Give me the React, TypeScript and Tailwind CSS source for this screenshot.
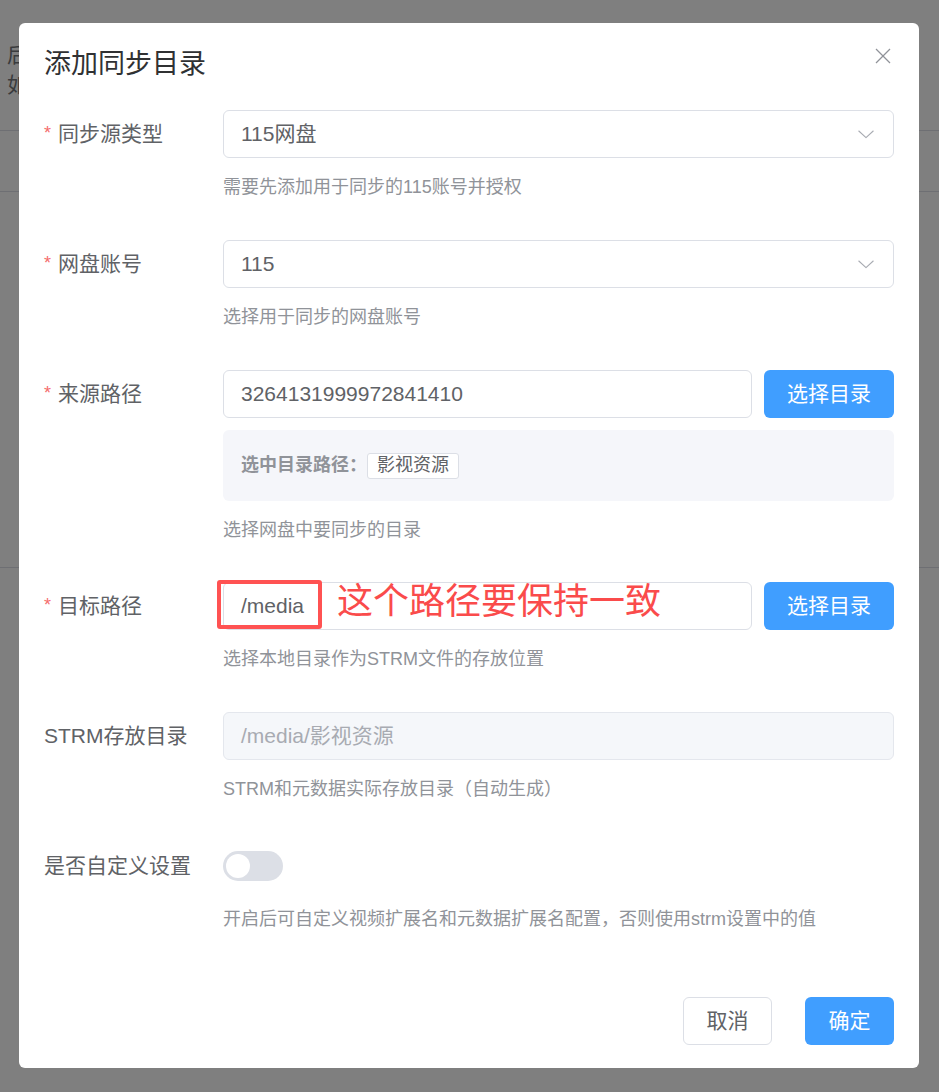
import React from "react";

const font = "font-['Liberation_Sans','Noto_Sans_CJK_SC',sans-serif]";

function Chevron() {
  return (
    <svg width="16" height="16" viewBox="0 0 16 16" fill="none">
      <polyline points="0.8,5 8,11.6 15.2,5" stroke="#a8abb2" strokeWidth="1.1" strokeLinejoin="round" strokeLinecap="round" />
    </svg>
  );
}

function Label({ text, required }: { text: string; required?: boolean }) {
  return (
    <div className="w-[179px] h-[48px] shrink-0 flex items-center text-[21px] text-[#606266]">
      {required && <span className="text-[#f56c6c] text-[18px] w-[14px] leading-none -mt-[2px]">*</span>}
      <span>{text}</span>
    </div>
  );
}

function Helper({ text }: { text: string }) {
  return <div className="mt-[16px] text-[18px] leading-[27px] text-[#909399]">{text}</div>;
}

function SelectBox({ value }: { value: string }) {
  return (
    <div className="h-[48px] w-full rounded-[6px] border border-[#dcdfe6] bg-white flex items-center justify-between pl-[17px] pr-[19px] text-[21px] text-[#606266]">
      <span>{value}</span>
      <Chevron />
    </div>
  );
}

function BlueBtn({ text, w }: { text: string; w: string }) {
  return (
    <div className={`${w} h-[48px] shrink-0 rounded-[6px] bg-[#409eff] text-white text-[21px] flex items-center justify-center`}>
      {text}
    </div>
  );
}

export default function App() {
  return (
    <div className={`relative w-[939px] h-[1092px] overflow-hidden bg-[#7f7f7f] ${font}`}>
      {/* background page (dimmed) */}
      <div className="h-[130px] pt-[40px] pl-[7px]">
        <div className="text-[21px] leading-[30px] text-[#3a3b3d] whitespace-nowrap">
          <div>后</div>
          <div>如</div>
        </div>
      </div>
      <div className="h-[1px] bg-[#6e6f73]" />
      <div className="h-[60px]" />
      <div className="h-[1px] bg-[#6e6f73]" />
      <div className="h-[375px]" />
      <div className="h-[1px] bg-[#6e6f73]" />

      {/* dialog overlay */}
      <div className="absolute inset-0 pt-[23px] pl-[19px]">
        <div className="relative w-[900px] h-[1045px] bg-white rounded-[6px] px-[25px] pt-[23px]">
          <div className="text-[27px] leading-[36px] text-[#303133]">添加同步目录</div>
          <div className="absolute top-[25px] right-[28px] w-[16px] h-[16px]">
            <svg width="16" height="16" viewBox="0 0 16 16">
              <line x1="1" y1="1" x2="15" y2="15" stroke="#909399" strokeWidth="1.3" />
              <line x1="15" y1="1" x2="1" y2="15" stroke="#909399" strokeWidth="1.3" />
            </svg>
          </div>

          <div className="mt-[28px]">
            {/* row 1 */}
            <div className="flex mb-[39px]">
              <Label text="同步源类型" required />
              <div className="flex-1">
                <SelectBox value="115网盘" />
                <Helper text="需要先添加用于同步的115账号并授权" />
              </div>
            </div>

            {/* row 2 */}
            <div className="flex mb-[39px]">
              <Label text="网盘账号" required />
              <div className="flex-1">
                <SelectBox value="115" />
                <Helper text="选择用于同步的网盘账号" />
              </div>
            </div>

            {/* row 3 */}
            <div className="flex mb-[38px]">
              <Label text="来源路径" required />
              <div className="flex-1">
                <div className="flex gap-[12px]">
                  <div className="flex-1 h-[48px] rounded-[6px] border border-[#dcdfe6] flex items-center pl-[17px] text-[21px] text-[#606266]">
                    3264131999972841410
                  </div>
                  <BlueBtn text="选择目录" w="w-[130px]" />
                </div>
                <div className="mt-[12px] h-[71px] rounded-[6px] bg-[#f5f6fa] flex items-center px-[18px]">
                  <span className="text-[18px] font-bold text-[#909399]">选中目录路径：</span>
                  <span className="h-[26px] px-[9px] flex items-center rounded-[3px] border border-[#dcdfe6] bg-white text-[18px] text-[#606266]">
                    影视资源
                  </span>
                </div>
                <Helper text="选择网盘中要同步的目录" />
              </div>
            </div>

            {/* row 4 */}
            <div className="flex mb-[39px]">
              <Label text="目标路径" required />
              <div className="flex-1">
                <div className="flex gap-[12px]">
                  <div className="relative flex-1 h-[48px] rounded-[6px] border border-[#dcdfe6] flex items-center pl-[17px] text-[21px] text-[#606266]">
                    /media
                    <div className="absolute left-[-7px] top-[-3px] w-[105px] h-[49px] rounded-[3px] border-[4px] border-[#ff5252]" />
                    <div className="absolute left-[113px] top-[-5px] text-[36px] leading-[48px] text-[#fa4b4b] whitespace-nowrap">
                      这个路径要保持一致
                    </div>
                  </div>
                  <BlueBtn text="选择目录" w="w-[130px]" />
                </div>
                <Helper text="选择本地目录作为STRM文件的存放位置" />
              </div>
            </div>

            {/* row 5 */}
            <div className="flex mb-[39px]">
              <Label text="STRM存放目录" />
              <div className="flex-1">
                <div className="h-[48px] rounded-[6px] border border-[#e4e7ed] bg-[#f5f7fa] flex items-center pl-[17px] text-[21px] text-[#a8abb2]">
                  /media/影视资源
                </div>
                <Helper text="STRM和元数据实际存放目录（自动生成）" />
              </div>
            </div>

            {/* row 6 */}
            <div className="flex">
              <Label text="是否自定义设置" />
              <div className="flex-1">
                <div className="h-[48px] flex items-center">
                  <div className="w-[60px] h-[30px] rounded-full bg-[#dcdfe6] flex items-center">
                    <div className="ml-[3px] w-[24px] h-[24px] rounded-full bg-white" />
                  </div>
                </div>
                <Helper text="开启后可自定义视频扩展名和元数据扩展名配置，否则使用strm设置中的值" />
              </div>
            </div>
          </div>

          {/* footer */}
          <div className="mt-[64px] flex justify-end gap-[33px]">
            <div className="w-[89px] h-[48px] rounded-[6px] border border-[#dcdfe6] bg-white text-[21px] text-[#606266] flex items-center justify-center">
              取消
            </div>
            <BlueBtn text="确定" w="w-[89px]" />
          </div>
        </div>
      </div>
    </div>
  );
}
